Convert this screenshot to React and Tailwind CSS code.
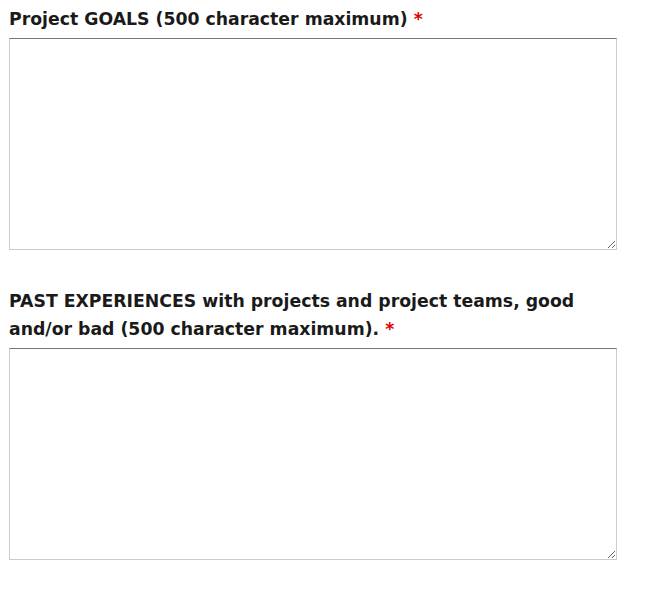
import React from "react";

const fieldClass =
  "block w-[608px] h-[212px] bg-white border border-[#cccccc] border-t-[#767676] resize";

function Field({ label, id, top }) {
  return (
    <div className={top}>
      <label htmlFor={id} className="block text-[17.3px] leading-[28px] font-bold text-[#1a1a1a] mb-[5px]">
        {label} <span className="text-[#e00000]">*</span>
      </label>
      <textarea id={id} className={fieldClass} />
    </div>
  );
}

export default function App() {
  return (
    <div className="bg-white min-h-[597px] pl-[9px] pt-[5px] font-['DejaVu_Sans',sans-serif]">
      <Field id="goals" label="Project GOALS (500 character maximum)" />
      <Field
        id="past"
        top="mt-[37px]"
        label={
          <>
            PAST EXPERIENCES with projects and project teams, good
            <br />
            and/or bad (500 character maximum).
          </>
        }
      />
    </div>
  );
}
